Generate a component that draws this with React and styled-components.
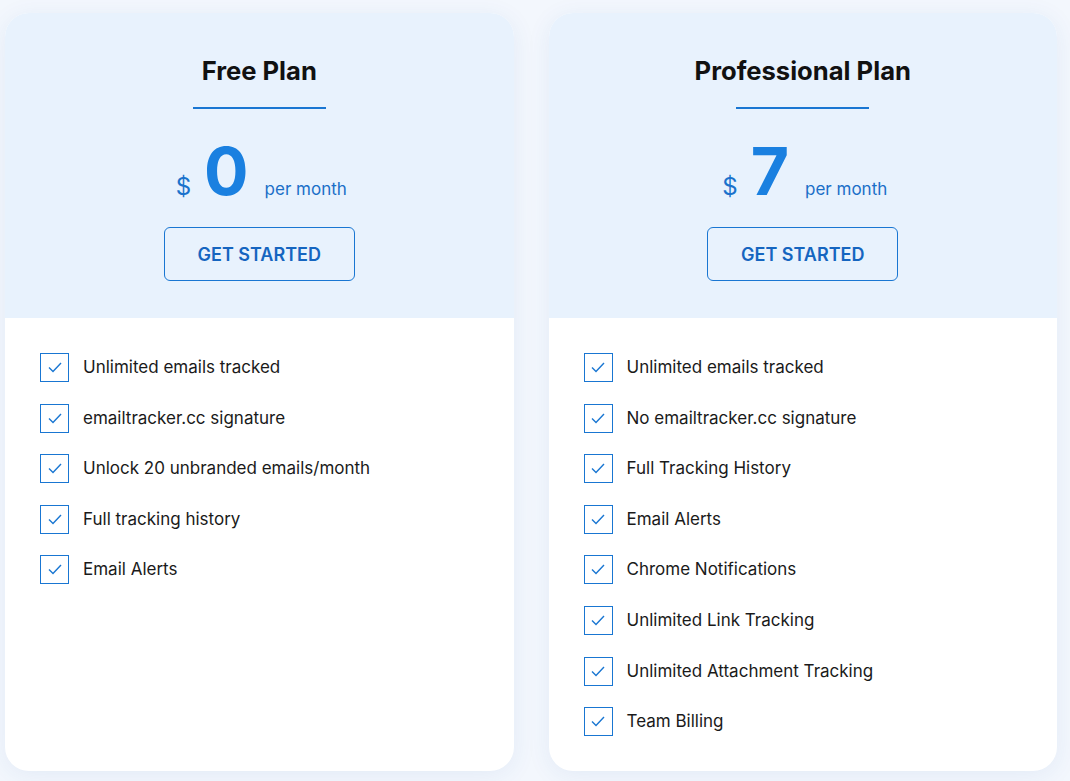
import React from "react";
import styled, { createGlobalStyle } from "styled-components";

const plans = [
  {
    name: "Free Plan",
    price: "0",
    features: [
      "Unlimited emails tracked",
      "emailtracker.cc signature",
      "Unlock 20 unbranded emails/month",
      "Full tracking history",
      "Email Alerts",
    ],
  },
  {
    name: "Professional Plan",
    price: "7",
    features: [
      "Unlimited emails tracked",
      "No emailtracker.cc signature",
      "Full Tracking History",
      "Email Alerts",
      "Chrome Notifications",
      "Unlimited Link Tracking",
      "Unlimited Attachment Tracking",
      "Team Billing",
    ],
  },
];

const GlobalStyle = createGlobalStyle`
  * { box-sizing: border-box; }
  body {
    margin: 0;
    background: #f3f7fd;
    font-family: Inter, "Noto Sans", sans-serif;
    color: #1a1a1a;
  }
`;

const PlanGrid = styled.div`
  display: grid;
  grid-template-columns: 1fr 1fr;
  gap: 35px;
  padding: 13px 13px 11px 5px;
  min-height: 781px;
`;

const Card = styled.section`
  background: #fff;
  border-radius: 24px;
  overflow: hidden;
  box-shadow: 0 4px 24px rgba(40, 90, 170, 0.08);
  display: flex;
  flex-direction: column;
`;

const Header = styled.header`
  background: #e8f2fd;
  display: flex;
  flex-direction: column;
  align-items: center;
  padding: 40px 0 37px;
`;

const Title = styled.h2`
  margin: 0;
  font-size: 25.6px;
  line-height: 36px;
  font-weight: 700;
  color: #111;
`;

const Underline = styled.div`
  width: 133px;
  height: 2px;
  background: #1976d2;
  margin-top: 18px;
`;

const PriceRow = styled.div`
  display: flex;
  align-items: baseline;
  margin-top: 28px;
  margin-left: 4px;
`;

const Currency = styled.span`
  font-size: 24px;
  color: #1a72cc;
  margin-right: 13px;
`;

const Amount = styled.span`
  font-size: 66px;
  line-height: 68px;
  font-weight: 700;
  color: #1a80e0;
  margin-right: 16px;
`;

const Period = styled.span`
  font-size: 17px;
  color: #1a6fc8;
`;

const StartButton = styled.button`
  margin-top: 22px;
  width: 191px;
  height: 54px;
  background: transparent;
  border: 1.5px solid #1976d2;
  border-radius: 6px;
  font-family: inherit;
  font-size: 18px;
  font-weight: 600;
  color: #1565c0;
  cursor: pointer;
`;

const FeatureList = styled.ul`
  list-style: none;
  margin: 0;
  padding: 35px 35px;
  display: flex;
  flex-direction: column;
  gap: 21.6px;
`;

const Feature = styled.li`
  display: flex;
  align-items: center;
  gap: 14px;
  font-size: 17px;
  line-height: 29px;
  color: #1a1a1a;
`;

const CheckBox = styled.span`
  width: 29px;
  height: 29px;
  flex: none;
  border: 1.5px solid #1976d2;
  display: flex;
  align-items: center;
  justify-content: center;
`;

const Check = () => (
  <svg width="14" height="11" viewBox="0 0 14 11" fill="none">
    <path d="M1 5.5 L5 9.5 L13 1" stroke="#1976d2" strokeWidth="1.4" />
  </svg>
);

const PlanCard = ({ plan }) => (
  <Card>
    <Header>
      <Title>{plan.name}</Title>
      <Underline />
      <PriceRow>
        <Currency>$</Currency>
        <Amount>{plan.price}</Amount>
        <Period>per month</Period>
      </PriceRow>
      <StartButton>GET STARTED</StartButton>
    </Header>
    <FeatureList>
      {plan.features.map((f) => (
        <Feature key={f}>
          <CheckBox>
            <Check />
          </CheckBox>
          {f}
        </Feature>
      ))}
    </FeatureList>
  </Card>
);

const App = () => (
  <>
    <GlobalStyle />
    <PlanGrid>
      {plans.map((p) => (
        <PlanCard key={p.name} plan={p} />
      ))}
    </PlanGrid>
  </>
);

export default App;
